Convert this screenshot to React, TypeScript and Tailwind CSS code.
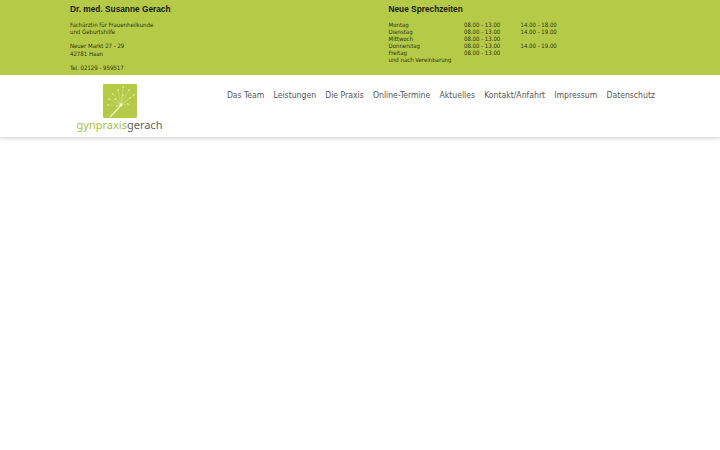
const navItems = ['Das Team', 'Leistungen', 'Die Praxis', 'Online-Termine', 'Aktuelles', 'Kontakt/Anfahrt', 'Impressum', 'Datenschutz'];

const hours = [
  ['Montag', '08.00 - 13.00', '14.00 - 18.00'],
  ['Dienstag', '08.00 - 13.00', '14.00 - 19.00'],
  ['Mittwoch', '08.00 - 13.00', ''],
  ['Donnerstag', '08.00 - 13.00', '14.00 - 19.00'],
  ['Freitag', '08.00 - 13.00', ''],
];

function LogoMark() {
  const tips = [
    [10, 10], [15, 6], [20, 3], [26, 6], [6, 15], [31, 11], [5, 21], [12, 15], [20, 11], [27, 14], [14, 22], [25, 20],
  ];
  return (
    <svg width="34" height="34" viewBox="0 0 34 34" className="block">
      <rect width="34" height="34" rx="1" fill="#b5cb47" />
      <path d="M7 33 C11 29 15 25 18 21" stroke="#eef3cf" strokeWidth="1.3" fill="none" />
      {tips.map(([x, y]) => (
        <g key={`${x}-${y}`}>
          <line x1="18" y1="21" x2={x} y2={y} stroke="#d6e293" strokeWidth="0.45" />
          <circle cx={x} cy={y} r="0.8" fill="#e6eeb8" />
        </g>
      ))}
      <circle cx="18" cy="21" r="1.4" fill="#fbfcf0" />
    </svg>
  );
}

export default function App() {
  return (
    <div className="min-h-[450px] bg-white font-['DejaVu_Sans',sans-serif] [font-stretch:condensed]">
      <div className="h-[75px] bg-[#b5cb47] pl-[70px] pt-[4px] text-[6px] leading-[7.5px] text-[#2c3210] flex">
        <div className="w-[318.5px]">
          <h1 className="font-['Liberation_Sans',sans-serif] text-[8.3px] leading-[10px] font-bold text-[#15180a]">Dr. med. Susanne Gerach</h1>
          <p className="mt-[6.5px]">Fachärztin für Frauenheilkunde<br />und Geburtshilfe</p>
          <p className="mt-[6.5px]">Neuer Markt 27 - 29<br />42781 Haan</p>
          <p className="mt-[6.5px]">Tel. 02129 - 959517</p>
        </div>
        <div>
          <h2 className="font-['Liberation_Sans',sans-serif] text-[8.3px] leading-[10px] font-bold text-[#15180a]">Neue Sprechzeiten</h2>
          <div className="mt-[7px] leading-[7px]">
            {hours.map(([day, morning, afternoon]) => (
              <div key={day} className="flex">
                <span className="w-[75.5px]">{day}</span>
                <span className="w-[56.5px]">{morning}</span>
                <span>{afternoon}</span>
              </div>
            ))}
            <p>und nach Vereinbarung</p>
          </div>
        </div>
      </div>
      <header className="h-[62px] flex justify-between pl-[76px] pr-[65px] shadow-[0_2px_3px_rgba(0,0,0,0.14)]">
        <div className="flex flex-col items-center pt-[9px] w-[87px]">
          <LogoMark />
          <div className="-mt-[1px] font-['Noto_Sans',sans-serif] text-[11px] leading-[16px] whitespace-nowrap [font-stretch:normal]">
            <span className="text-[#a9c03f]">gynpraxis</span>
            <span className="text-[#626467]">gerach</span>
          </div>
        </div>
        <nav className="flex gap-[9.2px] pt-[14px] h-fit text-[8.6px] leading-[12px] text-[#555]">
          {navItems.map((item) => (
            <a key={item} className="whitespace-nowrap">{item}</a>
          ))}
        </nav>
      </header>
    </div>
  );
}
